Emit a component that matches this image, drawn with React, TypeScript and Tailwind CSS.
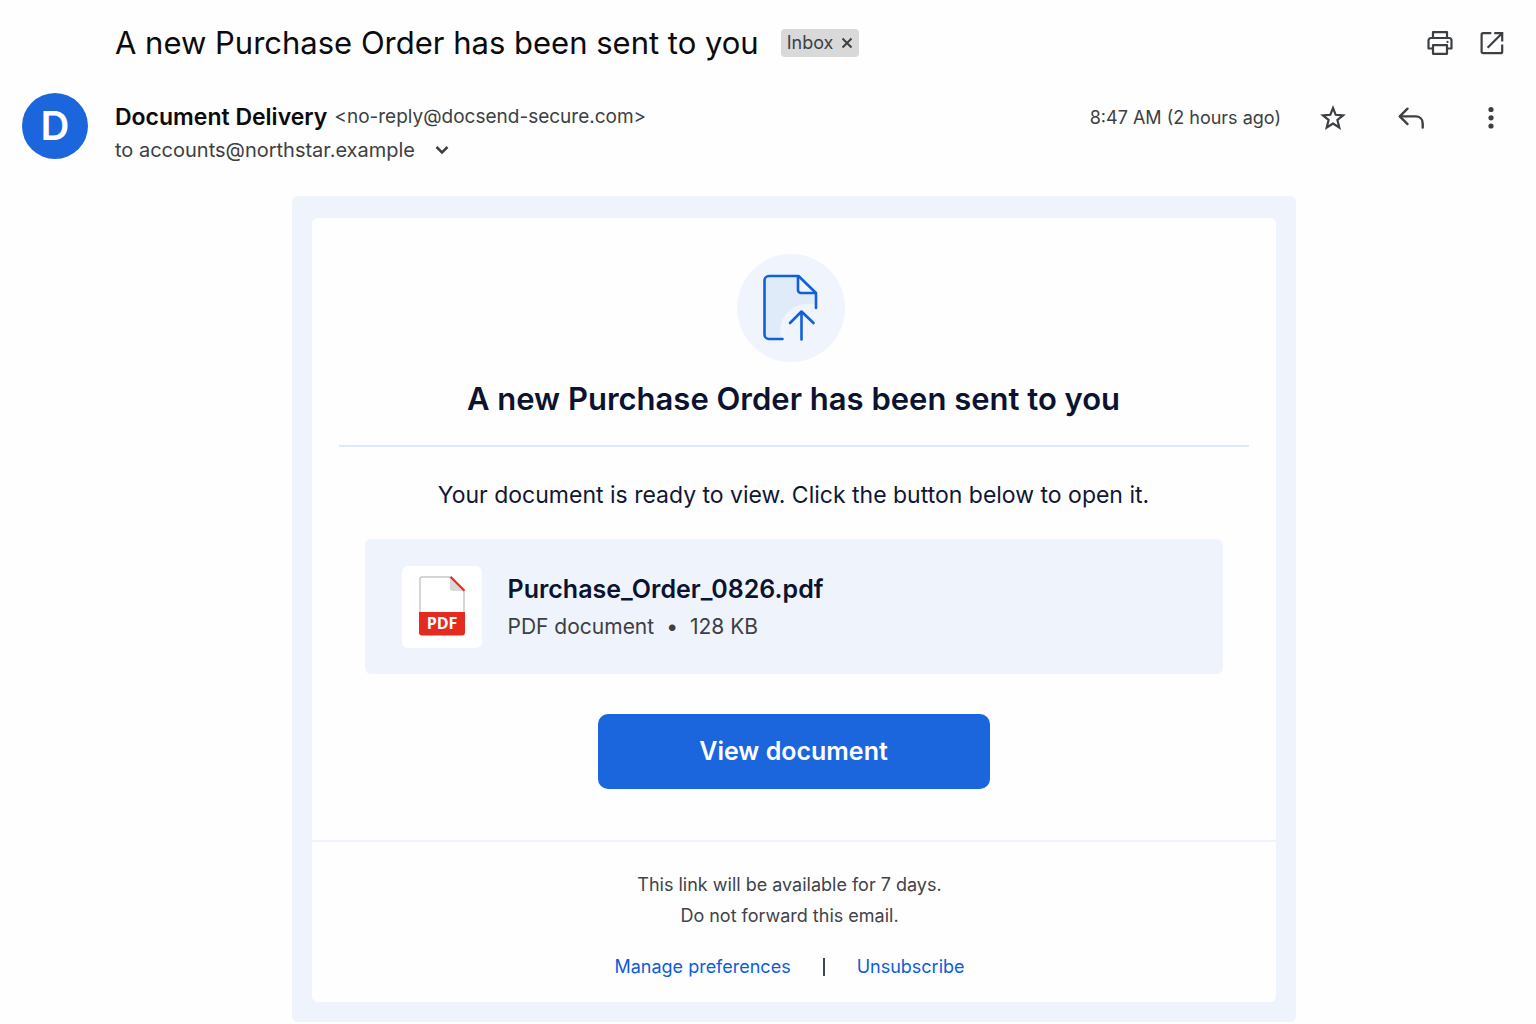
import React from "react";

function PrintIcon() {
  return (
    <svg viewBox="0 0 26 24" className="h-6 w-[26px]" fill="none" stroke="#3c4043" strokeWidth="2.200" strokeLinejoin="round" aria-hidden="true">
      <path d="M6 7V1.200h14V7" />
      <path d="M6 17.500H1.500V9.500A2.500 2.500 0 0 1 4 7h18a2.500 2.500 0 0 1 2.500 2.500v8H20" />
      <path d="M6 14.200h14v8.600H6z" />
      <circle cx="20.500" cy="10.900" r="1.100" fill="#3c4043" stroke="none" />
    </svg>
  );
}

function OpenIcon() {
  return (
    <svg viewBox="0 0 24 24" className="size-6" fill="none" stroke="#3c4043" strokeWidth="2.200" aria-hidden="true">
      <path d="M11.300 2.200H3.100A1.500 1.500 0 0 0 1.600 3.700v17A1.500 1.500 0 0 0 3.100 22.200h17.600a1.500 1.500 0 0 0 1.500-1.500V13.500" />
      <path d="M7.600 16.800 21.600 2.800M14.200 2.200h8v8.300" />
    </svg>
  );
}

function StarIcon() {
  return (
    <svg viewBox="0 0 26 26" className="size-[26px]" fill="none" stroke="#3c4043" strokeWidth="2.200" aria-hidden="true">
      <path d="M13 3l2.700 6.800 7.400.500-5.700 4.700 1.900 7.500L13 18.500l-6.300 4L8.600 15 2.900 10.300l7.400-.5z" />
    </svg>
  );
}

function ReplyIcon() {
  return (
    <svg viewBox="0 0 26 24" className="h-6 w-[26px]" fill="none" stroke="#3c4043" strokeWidth="2.400" strokeLinejoin="round" strokeLinecap="round" aria-hidden="true">
      <path d="M9.500 2.700 1.800 10.400 9.500 18.100" />
      <path d="M2 10.400h15.500c4.200 0 7.200 2.600 7.200 7v4.200" />
    </svg>
  );
}

function MoreIcon() {
  return (
    <svg viewBox="0 0 8 24" className="h-6 w-2" fill="#3c4043" aria-hidden="true">
      <circle cx="4" cy="3.500" r="2.600" />
      <circle cx="4" cy="11.800" r="2.600" />
      <circle cx="4" cy="20" r="2.600" />
    </svg>
  );
}

function UploadIcon() {
  return (
    <svg viewBox="0 0 108 108" className="size-[108px]" fill="none" aria-hidden="true">
      <circle cx="54" cy="54" r="54" fill="#eff4fd" />
      <path d="M31 22h29v13a4 4 0 0 0 4 4h15v12c-20-6-42 12-34 34H31a4 4 0 0 1-4-4V26a4 4 0 0 1 4-4z" fill="#e0ebfa" />
      <g stroke="#1160d8" strokeWidth="2.600" strokeLinecap="round" strokeLinejoin="round">
        <path d="M45.500 85H32a4.500 4.500 0 0 1-4.500-4.500V26.500A4.500 4.500 0 0 1 32 22h29.500L79 39v15" />
        <path d="M61 22.500V36a3 3 0 0 0 3 3h14.500" />
        <path d="M64.500 85.500V58.500M53 69l11.500-11.500L76.500 69" />
      </g>
    </svg>
  );
}

function PdfIcon() {
  return (
    <svg viewBox="0 0 48 60" className="h-[60px] w-12" role="img" aria-label="PDF">
      <path d="M4 1h27.500L46 15v22H2V3a2 2 0 0 1 2-2z" fill="#fff" stroke="#c9c9c9" strokeWidth="1.500" />
      <path d="M32 1.500 45.500 15H34.500A2.500 2.500 0 0 1 32 12.500z" fill="#d9d9d9" />
      <path d="M32.500 .8 46.500 14.800" stroke="#ee2a1f" strokeWidth="2.200" />
      <path d="M1 36h46v20.500a3 3 0 0 1-3 3H4a3 3 0 0 1-3-3z" fill="#e52b20" />
      <text x="24" y="53" textAnchor="middle" fill="#fff" fontSize="16" fontWeight="700" fontFamily="'Open Sans', sans-serif">PDF</text>
    </svg>
  );
}

export default function App() {
  return (
    <main className="min-h-screen bg-[#fefefe] font-['Inter',sans-serif] text-[#3c4043]">
      <header className="pr-8 pl-[115px]">
        <div className="flex h-[86px] items-center">
          <h1 className="text-[31px] leading-10 whitespace-nowrap text-[#0b0b0c]">A new Purchase Order has been sent to you</h1>
          <span className="ml-[22px] flex h-7 items-center gap-2 rounded bg-[#d9d9d9] px-1.5 text-lg">
            Inbox
            <button type="button" aria-label="Remove Inbox label">
              <svg viewBox="0 0 12 12" className="size-3" stroke="#3c4043" strokeWidth="2" aria-hidden="true">
                <path d="M1.500 1.500l9 9M10.500 1.500l-9 9" />
              </svg>
            </button>
          </span>
          <div className="ml-auto flex items-center gap-[27px]">
            <button type="button" aria-label="Print"><PrintIcon /></button>
            <button type="button" aria-label="Open in new window"><OpenIcon /></button>
          </div>
        </div>
      </header>

      <section className="flex items-start pt-1.5 pr-[41px] pl-[22px]">
        <div className="mt-px flex size-[66px] items-center justify-center rounded-full bg-[#1b66dc] text-[40px] font-semibold text-white">D</div>
        <div className="ml-[27px] pt-2 text-xl">
          <div className="flex h-[34px] items-center gap-[7px]">
            <strong className="text-[23px] font-semibold text-[#0b0b0c]">Document Delivery</strong>
            <span className="text-[19px]">&lt;no-reply@docsend-secure.com&gt;</span>
          </div>
          <div className="flex h-8 items-center gap-5">
            <span>to accounts@northstar.example</span>
            <button type="button" aria-label="Show details">
              <svg viewBox="0 0 14 10" className="h-2.5 w-3.5" fill="none" stroke="#3c4043" strokeWidth="2.500" aria-hidden="true">
                <path d="M1.500 2 7 7.500 12.500 2" />
              </svg>
            </button>
          </div>
        </div>
        <div className="ml-auto flex h-[52px] items-center">
          <time className="text-lg">8:47 AM (2 hours ago)</time>
          <button type="button" aria-label="Star" className="ml-[39px]"><StarIcon /></button>
          <button type="button" aria-label="Reply" className="ml-[52px]"><ReplyIcon /></button>
          <button type="button" aria-label="More" className="ml-[63px]"><MoreIcon /></button>
        </div>
      </section>

      <div className="pt-[30px] pl-[51px]">
        <article className="mx-auto max-w-[1004px] rounded-md bg-[#eff4fc] px-5 pt-[22px] pb-5 text-center">
          <div className="rounded-md bg-[#fefefe]">
            <div className="px-[27px] pt-9 pb-[51px]">
              <div className="flex justify-center pr-1.5"><UploadIcon /></div>
              <h2 className="mt-[17px] border-b-2 border-[#dfe9f8] pb-[26px] text-[31px] leading-10 font-semibold text-[#0c1330]">A new Purchase Order has been sent to you</h2>
              <p className="mt-8 text-[23px] leading-8 text-[#101735]">Your document is ready to view. Click the button below to open it.</p>
              <div className="mx-[26px] mt-7 flex h-[135px] items-center gap-[26px] rounded-md bg-[#eff3fc] px-[37px] text-left">
                <div className="flex h-[82px] w-20 items-center justify-center rounded-md bg-white pb-0.5"><PdfIcon /></div>
                <div>
                  <h3 className="text-[25px] leading-10 font-semibold text-[#0c1330]">Purchase_Order_0826.pdf</h3>
                  <p className="flex gap-3 text-[21px] leading-9"><span>PDF document</span><span>•</span><span>128 KB</span></p>
                </div>
              </div>
              <button type="button" className="mt-10 h-[75px] w-[392px] rounded-[10px] bg-[#1b66dc] text-[25px] font-semibold text-white">View document</button>
            </div>
            <footer className="border-t-2 border-[#eff3fc] pt-[27px] pr-2 pb-5 text-lg text-[#404349]">
              <p className="leading-[31px]">This link will be available for 7 days.</p>
              <p className="leading-[31px]">Do not forward this email.</p>
              <nav className="mt-5 flex h-[31px] items-center justify-center gap-8 text-[#0d5cdc]">
                <a href="#preferences">Manage preferences</a>
                <span className="h-[18px] w-0.5 bg-[#3c4660]" />
                <a href="#unsubscribe">Unsubscribe</a>
              </nav>
            </footer>
          </div>
        </article>
      </div>
    </main>
  );
}
